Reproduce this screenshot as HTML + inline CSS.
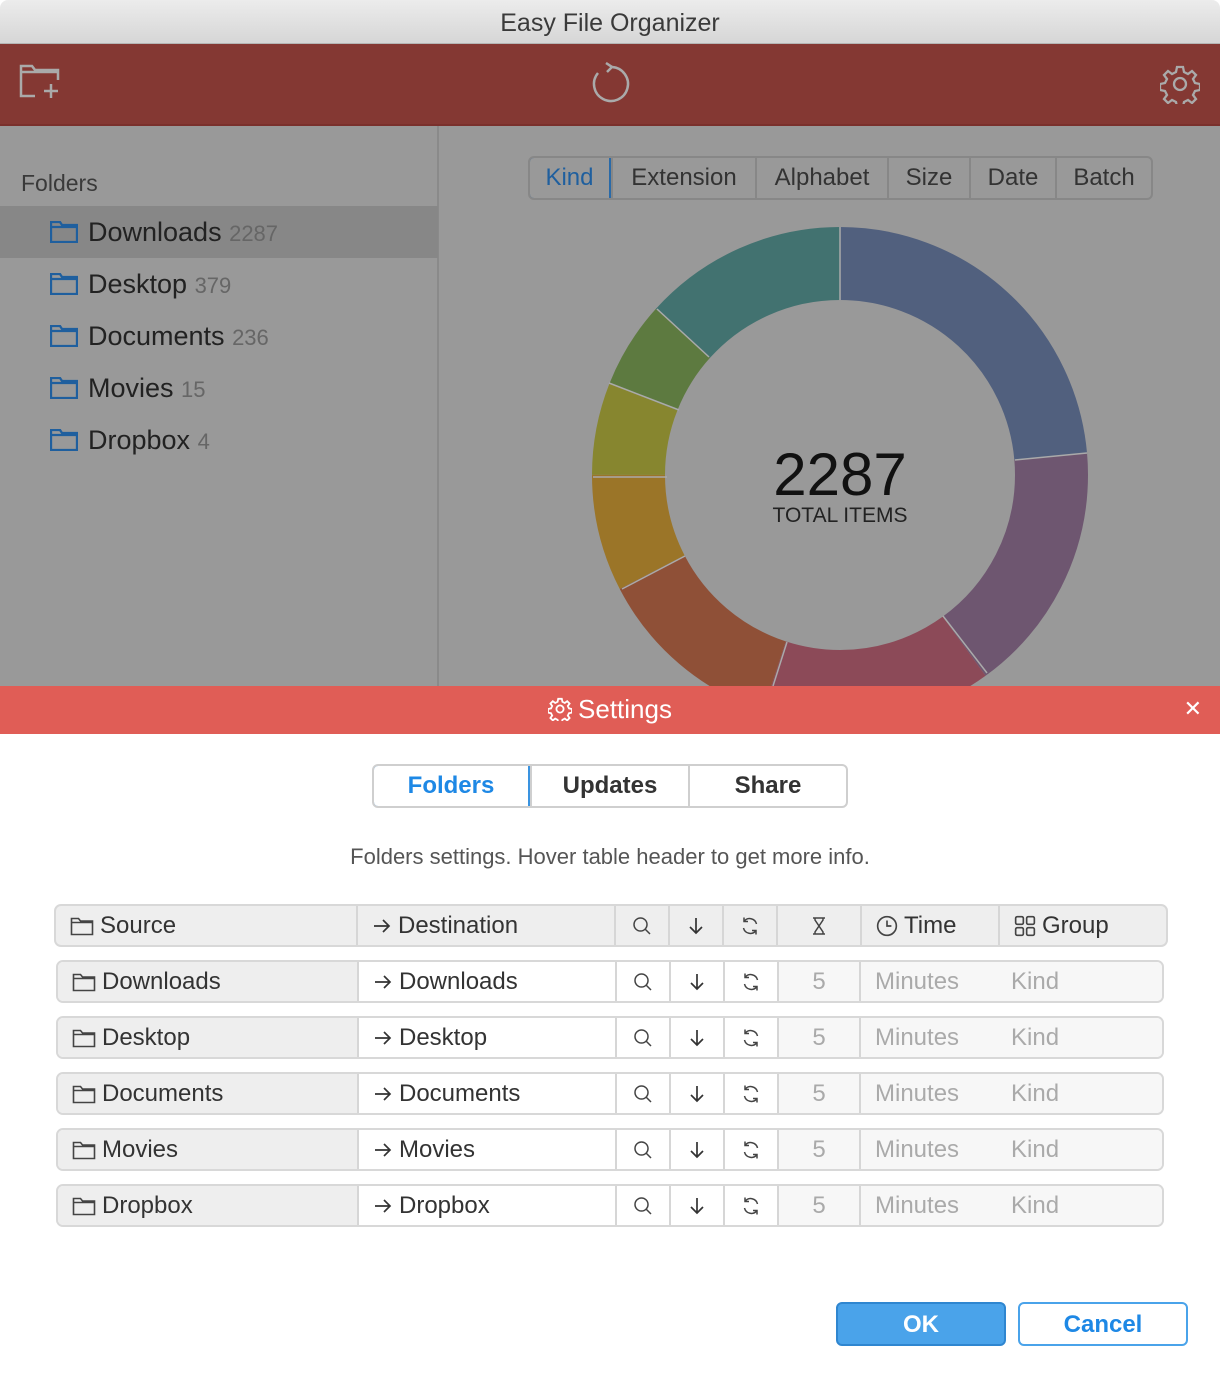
<!DOCTYPE html>
<html><head><meta charset="utf-8"><style>
*{box-sizing:border-box;margin:0;padding:0}
body{width:1220px;height:1380px;position:relative;overflow:hidden;background:#fff;font-family:"Liberation Sans",sans-serif;color:#333}
.abs{position:absolute}
#title{left:0;top:0;width:1220px;height:44px;background:linear-gradient(#ececec,#d6d6d6);border-bottom:1px solid #b5b5b5;text-align:center;line-height:46px;font-size:25px;color:#3a3a3a;border-radius:8px 8px 0 0}
#tool{left:0;top:44px;width:1220px;height:82px;background:#843833;border-bottom:2px solid #7a302c}
#main{left:0;top:126px;width:1220px;height:560px;background:#999}
#side{left:0;top:126px;width:439px;height:560px;border-right:2px solid #8a8a8a}
.fh{left:21px;top:170px;font-size:23px;color:#3a3a3a}
.fi{left:0;width:438px;height:52px;font-size:27px;color:#222;line-height:52px;padding-left:88px}
.fi span{color:#666;font-size:22px}
.fi svg{position:absolute;left:50px;top:15px}
.seg{display:flex;position:absolute;border-radius:6px;overflow:hidden}
.seg div{text-align:center}
#stabs{left:528px;top:156px;height:44px;border:2px solid #878787;font-size:24px;color:#333}
#stabs div{line-height:40px;border-left:2px solid #878787}
#shead{left:0;top:686px;width:1220px;height:48px;background:#e05d56;color:#fff;font-size:26px;text-align:center;line-height:46px}
#ftabs{left:372px;top:764px;width:476px;height:44px;border:2px solid #cfcfcf;font-size:24px;color:#333}
#ftabs div{line-height:40px;border-left:2px solid #cfcfcf}
.desc{left:0;width:1220px;top:844px;text-align:center;font-size:22px;color:#555}
.row{position:absolute;height:43px;border:2px solid #d8d8d8;border-radius:7px;overflow:hidden;display:flex;font-size:24px;color:#333}
.row>div{height:100%;border-left:2px solid #d6d6d6;display:flex;align-items:center;justify-content:center}
.row>div:first-child{border-left:none}
.hd{background:#eee}
.row .l{justify-content:flex-start;padding-left:14px}
.row svg{margin-right:6px;flex:none}
.row .c svg{margin:0}
.g{color:#aaa;background:#f7f7f7}
.btn{position:absolute;top:1302px;width:170px;height:44px;border-radius:6px;font-size:24px;text-align:center;line-height:42px;font-weight:bold}
</style></head><body>
<svg width="0" height="0" style="position:absolute">
<defs>
<symbol id="fold" viewBox="0 0 24 20"><path d="M1.5 18.5V2.5h7l2 2.5h12v13.5z M1.5 6.5h21" fill="none" stroke="#444" stroke-width="1.6"/></symbol>
<symbol id="arr" viewBox="0 0 20 20"><path d="M2 10h15M11 4l6 6-6 6" fill="none" stroke="#333" stroke-width="1.7"/></symbol>
<symbol id="srch" viewBox="0 0 20 20"><circle cx="8.5" cy="8.5" r="6.5" fill="none" stroke="#444" stroke-width="1.5"/><path d="M13 13l5 5" stroke="#444" stroke-width="1.5"/></symbol>
<symbol id="down" viewBox="0 0 20 20"><path d="M10 2v15M4 11l6 6 6-6" fill="none" stroke="#333" stroke-width="1.7"/></symbol>
<symbol id="rfr" viewBox="0 0 20 20"><path d="M16.5 8A7 7 0 0 0 4 5.5M3.5 12A7 7 0 0 0 16 14.5" fill="none" stroke="#444" stroke-width="1.5"/><path d="M4 1.5v4h4M16 18.5v-4h-4" fill="none" stroke="#444" stroke-width="1.5"/></symbol>
<symbol id="hour" viewBox="0 0 20 20"><path d="M4 2h12M4 18h12M6 2v2l8 12v2M14 2v2L6 16v2" fill="none" stroke="#444" stroke-width="1.5"/></symbol>
<symbol id="clk" viewBox="0 0 20 20"><circle cx="10" cy="10" r="8.5" fill="none" stroke="#444" stroke-width="1.5"/><path d="M10 5v5h4" fill="none" stroke="#444" stroke-width="1.5"/></symbol>
<symbol id="grid" viewBox="0 0 20 20"><g fill="none" stroke="#444" stroke-width="1.5"><rect x="1.5" y="1.5" width="7" height="7" rx="1.5"/><rect x="11.5" y="1.5" width="7" height="7" rx="1.5"/><rect x="1.5" y="11.5" width="7" height="7" rx="1.5"/><rect x="11.5" y="11.5" width="7" height="7" rx="1.5"/></g></symbol>
</defs></svg>
<div id="title" class="abs">Easy File Organizer</div>
<div id="tool" class="abs">
<svg class="abs" style="left:18px;top:20px" width="44" height="36" viewBox="0 0 44 36" fill="none" stroke="#aaa" stroke-width="2.5"><path d="M17 32H3V2h11l3 4h23v10"/><path d="M3 8h37"/><path d="M33 20v14M26 27h14"/></svg>
<svg class="abs" style="left:588px;top:18px" width="44" height="44" viewBox="0 0 44 44" fill="none" stroke="#aaa" stroke-width="2.5"><path d="M24 5a17 17 0 1 1-14 6"/><path d="M18 1l6 4-5 5"/></svg>
<svg class="abs" style="left:1160px;top:20px" width="40" height="40" viewBox="0 0 40 40" fill="none" stroke="#aaa" stroke-width="2.3"><path d="M17 3h6l1 5 4 2 4-3 4 4-3 4 2 4 5 1v6l-5 1-2 4 3 4-4 4-4-3-4 2-1 5h-6l-1-5-4-2-4 3-4-4 3-4-2-4-5-1v-6l5-1 2-4-3-4 4-4 4 3 4-2z"/><circle cx="20" cy="20" r="6"/></svg>
</div>
<div id="main" class="abs"></div>
<div id="side" class="abs"></div>
<div class="abs fh">Folders</div>
<div class="abs fi" style="top:206px;background:#878787">Downloads <span>2287</span><svg width="28" height="22" viewBox="0 0 28 22" fill="none" stroke="#1f5f9e" stroke-width="2.3"><path d="M1 21V1h9l2 3h15v17z M1 6h26"/></svg></div>
<div class="abs fi" style="top:258px">Desktop <span>379</span><svg width="28" height="22" viewBox="0 0 28 22" fill="none" stroke="#1f5f9e" stroke-width="2.3"><path d="M1 21V1h9l2 3h15v17z M1 6h26"/></svg></div>
<div class="abs fi" style="top:310px">Documents <span>236</span><svg width="28" height="22" viewBox="0 0 28 22" fill="none" stroke="#1f5f9e" stroke-width="2.3"><path d="M1 21V1h9l2 3h15v17z M1 6h26"/></svg></div>
<div class="abs fi" style="top:362px">Movies <span>15</span><svg width="28" height="22" viewBox="0 0 28 22" fill="none" stroke="#1f5f9e" stroke-width="2.3"><path d="M1 21V1h9l2 3h15v17z M1 6h26"/></svg></div>
<div class="abs fi" style="top:414px">Dropbox <span>4</span><svg width="28" height="22" viewBox="0 0 28 22" fill="none" stroke="#1f5f9e" stroke-width="2.3"><path d="M1 21V1h9l2 3h15v17z M1 6h26"/></svg></div>
<div id="stabs" class="seg"><div style="width:83px;border:2px solid #2a6aa8;border-radius:6px 0 0 6px;color:#1f5f9e;line-height:36px;margin:-2px 0 -2px -2px;height:44px;padding-top:2px">Kind</div><div style="width:144px">Extension</div><div style="width:132px">Alphabet</div><div style="width:82px">Size</div><div style="width:86px">Date</div><div style="width:96px">Batch</div></div>
<svg class="abs" style="left:0;top:0" width="1220" height="686" viewBox="0 0 1220 686">
<g transform="rotate(-90 840 475)" fill="none" stroke-width="73">
<circle cx="840" cy="475" r="211.5" stroke="#51607e" stroke-dasharray="313.8 2000" stroke-dashoffset="0"/>
<circle cx="840" cy="475" r="211.5" stroke="#6e5670" stroke-dasharray="217.8 2000" stroke-dashoffset="-313.8"/>
<circle cx="840" cy="475" r="211.5" stroke="#8c4a58" stroke-dasharray="199.3 2000" stroke-dashoffset="-531.6"/>
<circle cx="840" cy="475" r="211.5" stroke="#8f5037" stroke-dasharray="164.6 2000" stroke-dashoffset="-730.9"/>
<circle cx="840" cy="475" r="211.5" stroke="#9b7528" stroke-dasharray="101.1 2000" stroke-dashoffset="-895.5"/>
<circle cx="840" cy="475" r="211.5" stroke="#87862f" stroke-dasharray="79.7 2000" stroke-dashoffset="-996.6"/>
<circle cx="840" cy="475" r="211.5" stroke="#5d7a40" stroke-dasharray="75.3 2000" stroke-dashoffset="-1076.3"/>
<circle cx="840" cy="475" r="211.5" stroke="#427270" stroke-dasharray="177.3 2000" stroke-dashoffset="-1151.6"/>
</g>
<g stroke="#aaa" stroke-width="1.5">
<path d="M840 227V300M1015 460L1087 453M943 616L987 673M787 642L773 686M685 556L622 589M667 477H593M679 410L609 383M709 357L657 309"/>
</g>
<text x="840" y="495" text-anchor="middle" font-family="Liberation Sans" font-size="60" fill="#111">2287</text>
<text x="840" y="522" text-anchor="middle" font-family="Liberation Sans" font-size="21" fill="#222">TOTAL ITEMS</text>
</svg>
<div id="shead" class="abs"><svg style="vertical-align:-3px;margin-right:6px" width="24" height="24" viewBox="0 0 40 40" fill="none" stroke="#fff" stroke-width="3"><path d="M17 3h6l1 5 4 2 4-3 4 4-3 4 2 4 5 1v6l-5 1-2 4 3 4-4 4-4-3-4 2-1 5h-6l-1-5-4-2-4 3-4-4 3-4-2-4-5-1v-6l5-1 2-4-3-4 4-4 4 3 4-2z"/><circle cx="20" cy="20" r="6"/></svg>Settings<span style="position:absolute;right:18px;font-size:22px">✕</span></div>
<div id="ftabs" class="seg"><div style="width:158px;border:2px solid #3a93e0;border-radius:6px 0 0 6px;color:#1e88e5;margin:-2px 0 -2px -2px;height:44px;font-weight:bold">Folders</div><div style="width:158px;font-weight:bold">Updates</div><div style="width:158px;font-weight:bold">Share</div></div>
<div class="abs desc">Folders settings. Hover table header to get more info.</div>

<div class="row hd" style="left:54px;top:904px;width:1114px">
<div class="l" style="width:300px"><svg width="24" height="20"><use href="#fold"/></svg>Source</div>
<div class="l" style="width:258px"><svg width="20" height="20"><use href="#arr"/></svg>Destination</div>
<div class="c" style="width:54px"><svg width="20" height="20"><use href="#srch"/></svg></div><div class="c" style="width:54px"><svg width="20" height="20"><use href="#down"/></svg></div><div class="c" style="width:54px"><svg width="20" height="20"><use href="#rfr"/></svg></div>
<div class="c" style="width:84px"><svg width="20" height="20"><use href="#hour"/></svg></div>
<div class="l" style="width:138px"><svg width="22" height="22"><use href="#clk"/></svg>Time</div>
<div class="l" style="flex:1"><svg width="22" height="22"><use href="#grid"/></svg>Group</div>
</div>

<div class="row" style="left:56px;top:960px;width:1108px"><div class="l hd" style="width:299px"><svg width="24" height="20"><use href="#fold"/></svg>Downloads</div><div class="l" style="width:258px"><svg width="20" height="20"><use href="#arr"/></svg>Downloads</div><div class="c" style="width:54px"><svg width="20" height="20"><use href="#srch"/></svg></div><div class="c" style="width:54px"><svg width="20" height="20"><use href="#down"/></svg></div><div class="c" style="width:54px"><svg width="20" height="20"><use href="#rfr"/></svg></div><div class="g" style="width:82px">5</div><div class="l g" style="width:138px">Minutes</div><div class="l g" style="flex:1;border-left:none">Kind</div></div>
<div class="row" style="left:56px;top:1016px;width:1108px"><div class="l hd" style="width:299px"><svg width="24" height="20"><use href="#fold"/></svg>Desktop</div><div class="l" style="width:258px"><svg width="20" height="20"><use href="#arr"/></svg>Desktop</div><div class="c" style="width:54px"><svg width="20" height="20"><use href="#srch"/></svg></div><div class="c" style="width:54px"><svg width="20" height="20"><use href="#down"/></svg></div><div class="c" style="width:54px"><svg width="20" height="20"><use href="#rfr"/></svg></div><div class="g" style="width:82px">5</div><div class="l g" style="width:138px">Minutes</div><div class="l g" style="flex:1;border-left:none">Kind</div></div>
<div class="row" style="left:56px;top:1072px;width:1108px"><div class="l hd" style="width:299px"><svg width="24" height="20"><use href="#fold"/></svg>Documents</div><div class="l" style="width:258px"><svg width="20" height="20"><use href="#arr"/></svg>Documents</div><div class="c" style="width:54px"><svg width="20" height="20"><use href="#srch"/></svg></div><div class="c" style="width:54px"><svg width="20" height="20"><use href="#down"/></svg></div><div class="c" style="width:54px"><svg width="20" height="20"><use href="#rfr"/></svg></div><div class="g" style="width:82px">5</div><div class="l g" style="width:138px">Minutes</div><div class="l g" style="flex:1;border-left:none">Kind</div></div>
<div class="row" style="left:56px;top:1128px;width:1108px"><div class="l hd" style="width:299px"><svg width="24" height="20"><use href="#fold"/></svg>Movies</div><div class="l" style="width:258px"><svg width="20" height="20"><use href="#arr"/></svg>Movies</div><div class="c" style="width:54px"><svg width="20" height="20"><use href="#srch"/></svg></div><div class="c" style="width:54px"><svg width="20" height="20"><use href="#down"/></svg></div><div class="c" style="width:54px"><svg width="20" height="20"><use href="#rfr"/></svg></div><div class="g" style="width:82px">5</div><div class="l g" style="width:138px">Minutes</div><div class="l g" style="flex:1;border-left:none">Kind</div></div>
<div class="row" style="left:56px;top:1184px;width:1108px"><div class="l hd" style="width:299px"><svg width="24" height="20"><use href="#fold"/></svg>Dropbox</div><div class="l" style="width:258px"><svg width="20" height="20"><use href="#arr"/></svg>Dropbox</div><div class="c" style="width:54px"><svg width="20" height="20"><use href="#srch"/></svg></div><div class="c" style="width:54px"><svg width="20" height="20"><use href="#down"/></svg></div><div class="c" style="width:54px"><svg width="20" height="20"><use href="#rfr"/></svg></div><div class="g" style="width:82px">5</div><div class="l g" style="width:138px">Minutes</div><div class="l g" style="flex:1;border-left:none">Kind</div></div>

<div class="btn" style="left:836px;background:#4aa3ea;border:2px solid #2f86d0;color:#fff">OK</div>
<div class="btn" style="left:1018px;background:#fff;border:2px solid #4aa3ea;color:#1e88e5">Cancel</div>
</body></html>
